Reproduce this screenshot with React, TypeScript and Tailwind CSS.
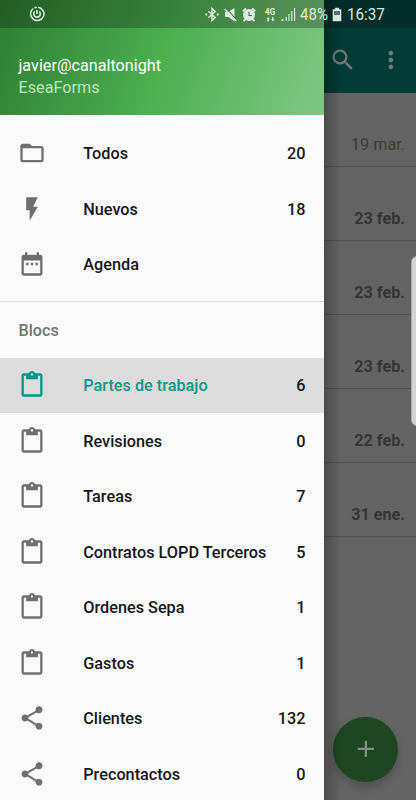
import React from "react";
import { MdAdd, MdContentPaste, MdDateRange, MdFlashOn, MdFolderOpen, MdMoreVert, MdSearch, MdShare } from "react-icons/md";
import type { IconType } from "react-icons";

interface MenuItem {
  label: string;
  icon: IconType;
  count?: number;
  active?: boolean;
}

const mainItems: MenuItem[] = [
  { label: "Todos", icon: MdFolderOpen, count: 20 },
  { label: "Nuevos", icon: MdFlashOn, count: 18 },
  { label: "Agenda", icon: MdDateRange },
];

const blocItems: MenuItem[] = [
  { label: "Partes de trabajo", icon: MdContentPaste, count: 6, active: true },
  { label: "Revisiones", icon: MdContentPaste, count: 0 },
  { label: "Tareas", icon: MdContentPaste, count: 7 },
  { label: "Contratos LOPD Terceros", icon: MdContentPaste, count: 5 },
  { label: "Ordenes Sepa", icon: MdContentPaste, count: 1 },
  { label: "Gastos", icon: MdContentPaste, count: 1 },
  { label: "Clientes", icon: MdShare, count: 132 },
  { label: "Precontactos", icon: MdShare, count: 0 },
];

const dates = [
  { text: "19 mar.", read: true },
  { text: "23 feb." },
  { text: "23 feb." },
  { text: "23 feb." },
  { text: "22 feb." },
  { text: "31 ene." },
];

const MenuRow: React.FC<{ item: MenuItem }> = ({ item }) => {
  const Icon = item.icon;
  return (
    <li
      className={`flex h-[55.5px] shrink-0 items-center pl-[18px] pr-[18.5px] text-[16.25px] font-medium ${
        item.active ? "bg-[#dcdcdc]" : ""
      }`}
    >
      <Icon className={`size-[28px] shrink-0 ${item.active ? "text-[#009688]" : "text-[#6f6f6f]"}`} />
      <span className={`ml-[37.25px] flex-1 whitespace-nowrap pt-[2px] ${item.active ? "text-[#0d9587]" : "text-[#161616]"}`}>
        {item.label}
      </span>
      <span className="pt-[2px] text-[#161616]">{item.count}</span>
    </li>
  );
};

const StatusBar = () => (
  <div className="absolute inset-x-0 top-0 flex h-7 items-center bg-black/25 pl-[29px] text-[#dcebdc]">
    <svg className="h-4 w-4" viewBox="0 0 16 16" fill="none" stroke="currentColor" strokeWidth="1.5">
      <path d="M9.2 1.2A6.7 6.7 0 1 1 4.2 2.5M5.5 1.7A6.7 6.7 0 0 1 7.8 1.2M11 1.9a6.7 6.7 0 0 1 3.4 4" />
      <path d="M5.7 5.5a3.3 3.3 0 1 0 4.6 0M8 4v4" strokeWidth="1.6" />
    </svg>
    {/* Bluetooth, mute, alarm */}
    <svg className="ml-[160px] mt-px h-[15px] w-[14px]" viewBox="0 0 14 15" fill="none" stroke="currentColor" strokeWidth="1.5">
      <path d="M3.4 4.2l6.8 6.3L7 13.4V1.5l3.2 2.9-6.8 6.3" />
      <path d="M.4 7.5h1.8M11.8 7.5h1.8" strokeWidth="1.8" />
    </svg>
    <svg className="ml-[5px] mt-px h-[15px] w-[14px]" viewBox="0 0 14 15">
      <path d="M1 5h3l6.5-4v13.5L4.5 10H1z" fill="currentColor" />
      <path d="M1.7 1.2l11 11.6" stroke="#3b7440" strokeWidth="1.2" />
      <path d="M.8 2l11.4 12" stroke="currentColor" strokeWidth="1.6" />
    </svg>
    <svg className="ml-[4px] mt-px h-[15px] w-[14px]" viewBox="0 0 14 15" fill="none">
      <circle cx="7" cy="8" r="6" fill="currentColor" />
      <path d="M.8 4.2L4 1.5M13.2 4.2L10 1.5M3 12.5l-1.4 1.7M11 12.5l1.4 1.7" stroke="currentColor" strokeWidth="2" />
      <path d="M7 4.8v3.7h2.8" stroke="#427a44" strokeWidth="1.2" />
    </svg>
    <div className="ml-[8px] flex w-[12px] flex-col items-center pt-px">
      <span className="text-[8.5px] font-bold leading-[9px]">4G</span>
      <svg className="h-[5px] w-[9px]" viewBox="0 0 9 5" fill="currentColor">
        <path d="M2.2 0l1.7 2.3H2.9V4.5H1.5V2.3H.5zM6.8 4.5L5.1 2.2h1V0h1.4v2.2h1z" />
      </svg>
    </div>
    <svg className="ml-[5px] mt-px h-[15px] w-[15px]" viewBox="0 0 15 15" fill="currentColor">
      <path d="M.5 12.2h1.8V14H.5zM4.6 10h1.2v4H4.6zM7.4 7h1.2v7H7.4zM10.2 4h1.2v10h-1.2zM13 1h1.2v13H13z" />
    </svg>
    <span className="ml-[4px] w-[29px] origin-left scale-x-[0.91] pt-[2px] text-[16.5px] leading-none">48%</span>
    <svg className="ml-[3px] mt-px h-[15px] w-[10px]" viewBox="0 0 10 15">
      <path d="M3 .7h4v1.5h2.3v12H.7v-12H3z" fill="#dce4e3" />
      <path d="M2 4h6v4H2z" fill="#526f6b" />
    </svg>
    <span className="ml-[5px] origin-left scale-x-[0.92] pt-[2px] text-[16.5px] leading-none">16:37</span>
  </div>
);

const FormsPage = () => (
  <div className="flex h-full flex-col bg-[#646464]">
    <header className="flex h-[92.5px] shrink-0 items-start justify-end bg-[#003c36] pr-[11px] pt-[46px] text-[#717b7a]">
      <MdSearch className="size-[27.75px]" />
      <MdMoreVert className="ml-[21px] size-[27.75px]" />
    </header>
    <ul className="flex flex-col">
      {dates.map((date, index) => (
        <li
          key={index}
          className={`flex h-[74px] items-end justify-end border-b border-[#515151] pb-[8px] pr-[11px] text-[16.2px] ${
            date.read ? "text-[#3b3b3b]" : "font-bold text-[#353535]"
          }`}
        >
          {date.text}
        </li>
      ))}
    </ul>
  </div>
);

const Drawer = () => (
  <aside className="absolute inset-y-0 left-0 flex w-[324px] flex-col overflow-hidden bg-[#fafafa]">
    <div className="flex h-[115px] shrink-0 flex-col bg-[linear-gradient(109.5deg,#2e7d32,#4caf50_50%,#81c784)] pl-[18.5px] pt-[54px]">
      <p className="text-[16.2px] leading-6 text-white">javier@canaltonight</p>
      <p className="-mt-[2px] text-[16.2px] leading-6 text-[#bde7be]">EseaForms</p>
    </div>
    <ul className="flex flex-col pb-[9px] pt-[10.5px]">
      {mainItems.map((item) => (
        <MenuRow key={item.label} item={item} />
      ))}
    </ul>
    <h2 className="flex h-[56.5px] shrink-0 items-center border-t border-[#dadada] pl-[18.5px] pt-[2.5px] text-[16.2px] font-medium text-[#747474]">
      Blocs
    </h2>
    <ul className="flex flex-col">
      {blocItems.map((item) => (
        <MenuRow key={item.label} item={item} />
      ))}
    </ul>
  </aside>
);

const App: React.FC = () => {
  return (
    <div className="relative h-[800px] w-[416px] overflow-hidden font-['Roboto',sans-serif]">
      <FormsPage />
      <button className="absolute left-[333px] top-[716.5px] flex size-[65px] items-center justify-center rounded-full bg-[#1e4620] text-[#819082] shadow-[0_5px_8px_rgba(0,0,0,0.2)]">
        <MdAdd className="size-[27.75px]" />
      </button>
      <div className="absolute inset-y-0 left-[324px] w-[18px] bg-linear-to-r from-black/25 to-transparent" />
      <Drawer />
      <StatusBar />
      {/* Edge panel handle */}
      <div className="absolute -right-2 top-[256px] h-[170px] w-[13px] rounded-md border border-[#a9a9a9] bg-[#d3d3d3]" />
    </div>
  );
};

export default App;
